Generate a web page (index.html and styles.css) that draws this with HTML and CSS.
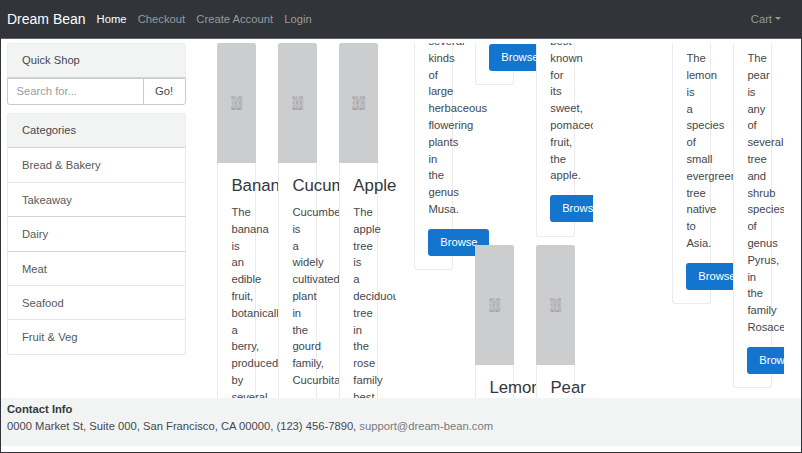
FILE: index.html
```html
<!DOCTYPE html>
<html lang="en">
<head>
<meta charset="utf-8">
<title>Dream Bean</title>
<link rel="stylesheet" href="styles.css">
</head>
<body>
<nav class="navbar">
  <a class="brand">Dream Bean</a>
  <a class="nav-link active">Home</a>
  <a class="nav-link">Checkout</a>
  <a class="nav-link">Create Account</a>
  <a class="nav-link">Login</a>
  <a class="nav-link cart">Cart<span class="caret"></span></a>
</nav>
<div class="content">
  <aside class="sidebar">
    <section class="search">
      <h2 class="panel-head">Quick Shop</h2>
      <div class="search-group">
        <span class="search-input">Search for...</span>
        <span class="search-go">Go!</span>
      </div>
    </section>
    <section class="categories">
      <h2 class="panel-head">Categories</h2>
      <a class="category">Bread &amp; Bakery</a>
      <a class="category">Takeaway</a>
      <a class="category">Dairy</a>
      <a class="category">Meat</a>
      <a class="category">Seafood</a>
      <a class="category">Fruit &amp; Veg</a>
    </section>
  </aside>
  <main class="panes">
    <div class="pane">
      <div class="row">
        <article class="card">
          <svg class="thumb" viewBox="0 0 39 120"><text x="14" y="67" textLength="11" lengthAdjust="spacingAndGlyphs">318x180</text></svg>
          <div class="body"><h3>Banana</h3><p>The banana is an edible fruit, botanically a berry, produced by several</p></div>
        </article>
        <article class="card">
          <svg class="thumb" viewBox="0 0 39 120"><text x="14" y="67" textLength="11" lengthAdjust="spacingAndGlyphs">318x180</text></svg>
          <div class="body"><h3>Cucumber</h3><p>Cucumber is a widely cultivated plant in the gourd family, Cucurbitaceae.</p></div>
        </article>
        <article class="card">
          <svg class="thumb" viewBox="0 0 39 120"><text x="13" y="67" textLength="13" lengthAdjust="spacingAndGlyphs">318x180</text></svg>
          <div class="body"><h3>Apple</h3><p>The apple tree is a deciduous tree in the rose family best</p></div>
        </article>
      </div>
    </div>
    <div class="pane">
      <div class="row continued">
        <article class="card tail"><p>several kinds of large herbaceous flowering plants in the genus Musa.</p><a class="btn">Browse</a></article>
        <article class="card tail"><a class="btn">Browse</a></article>
        <article class="card tail"><p>best known for its sweet, pomaceous fruit, the apple.</p><a class="btn">Browse</a></article>
      </div>
      <div class="row second">
        <article class="card">
          <svg class="thumb" viewBox="0 0 39 120"><text x="14" y="67" textLength="11" lengthAdjust="spacingAndGlyphs">318x180</text></svg>
          <div class="body"><h3>Lemon</h3></div>
        </article>
        <article class="card">
          <svg class="thumb" viewBox="0 0 39 120"><text x="14" y="67" textLength="11" lengthAdjust="spacingAndGlyphs">318x180</text></svg>
          <div class="body"><h3>Pear</h3></div>
        </article>
      </div>
    </div>
    <div class="pane last">
      <div class="row last-row">
        <article class="card tail"><p>The lemon is a species of small evergreen tree native to Asia.</p><a class="btn">Browse</a></article>
        <article class="card tail"><p>The pear is any of several tree and shrub species of genus Pyrus, in the family Rosaceae.</p><a class="btn">Browse</a></article>
      </div>
    </div>
  </main>
</div>
<footer class="footer">
  <strong>Contact Info</strong>
  <div>0000 Market St, Suite 000, San Francisco, CA 00000, (123) 456-7890, <a class="mail">support@dream-bean.com</a></div>
</footer>
</body>
</html>
```
FILE: styles.css
```css
* { box-sizing: border-box; }

body {
  margin: 0;
  width: 802px;
  height: 453px;
  overflow: hidden;
  border: 1px solid #303438;
  border-top: 0;
  background: #fff;
  color: #44484c;
  font: 11.23px/16.8px "Liberation Sans", Arial, sans-serif;
}

h2, h3, p { margin: 0; font-weight: 400; }

.navbar {
  display: flex;
  align-items: center;
  height: 39px;
  padding: 0 20px 0 6px;
  background: #313539;
  border-bottom: 1px solid #626366;
}

.brand { margin-right: 11px; color: #fff; font-size: 14px; }
.nav-link { margin-right: 11.2px; color: #979a9c; }
.nav-link.active { color: #fff; }
.nav-link.cart { display: flex; align-items: center; margin: 0 0 0 auto; }

.caret {
  margin-left: 3px;
  border: 3px solid transparent;
  border-top-color: #979a9c;
  border-bottom: 0;
}

.content { display: flex; height: 359px; padding: 4px 0 0 6px; }

.sidebar { width: 178.5px; margin-right: 31.5px; }

.panel-head {
  height: 35.4px;
  padding: 8.4px 14px;
  background: #f2f4f4;
  border: 1px solid #eceeee;
  border-bottom-color: #d2d4d5;
  border-radius: 3px 3px 0 0;
  font-size: 11.2px;
  line-height: 16.8px;
}

.search { height: 70px; }

.search-group {
  display: flex;
  height: 27px;
  border: 1px solid #c9cbcd;
  border-radius: 0 0 3px 3px;
  line-height: 24px;
}

.search-input { flex: 1; padding-left: 8.5px; color: #999c9f; }
.search-go { width: 42px; border-left: 1px solid #c9cbcd; text-align: center; }

.categories {
  height: 242px;
  border-radius: 3px;
}

.category {
  display: block;
  height: 34.4px;
  padding: 9px 14px 0;
  border: solid #e6e8e9;
  border-width: 0 1px 1px;
  color: #55595c;
}
.category:nth-of-type(2), .category:nth-of-type(3) { border-bottom-color: #d2d4d5; }
.category:last-child { border-radius: 0 0 3px 3px; }

.panes { display: flex; gap: 18px; }

.pane {
  display: flex;
  flex-direction: column;
  width: 179px;
  height: 355px;
  overflow: hidden;
}
.pane.last { width: 173px; }

.row { display: flex; flex: none; align-items: flex-start; gap: 21.6px; }
.row.continued { height: 202px; }
.row.second { padding-left: 61px; }
.row.last-row { padding-left: 61px; }

.card {
  flex: none;
  width: 39.4px;
  border: 1px solid #e9ebec;
  border-top-color: #cccdcf;
  border-radius: 3px;
  background: #fff;
}

.thumb {
  display: block;
  width: 39.4px;
  height: 120px;
  margin: -1px;
  border-radius: 3px 3px 0 0;
  background: #cccdcf;
}
.thumb text { fill: #8e9194; font: 20px "Liberation Sans", Arial, sans-serif; }

.body { padding: 15.4px 13.4px 13px; }
.body h3 { margin-bottom: 8.2px; color: #33373a; font-size: 16.8px; line-height: 18.5px; }

.tail { border-top: 0; border-radius: 0 0 3px 3px; padding: 0 13.4px 13.5px; }
.continued .tail { margin-top: -10px; }
.continued .tail:nth-child(2) { margin-top: 0; padding-top: 1px; }
.last-row .tail { padding-top: 7.3px; }
.tail p { margin-bottom: 11.2px; }

.btn {
  display: block;
  width: 61px;
  height: 26.8px;
  border-radius: 3px;
  background: #1475cf;
  color: #fff;
  line-height: 26px;
  text-align: center;
}

.footer { height: 48px; padding: 3px 6px 0; background: #f2f4f4; }
.footer strong { display: block; color: #33373a; }
.mail { color: #76797c; }
```
